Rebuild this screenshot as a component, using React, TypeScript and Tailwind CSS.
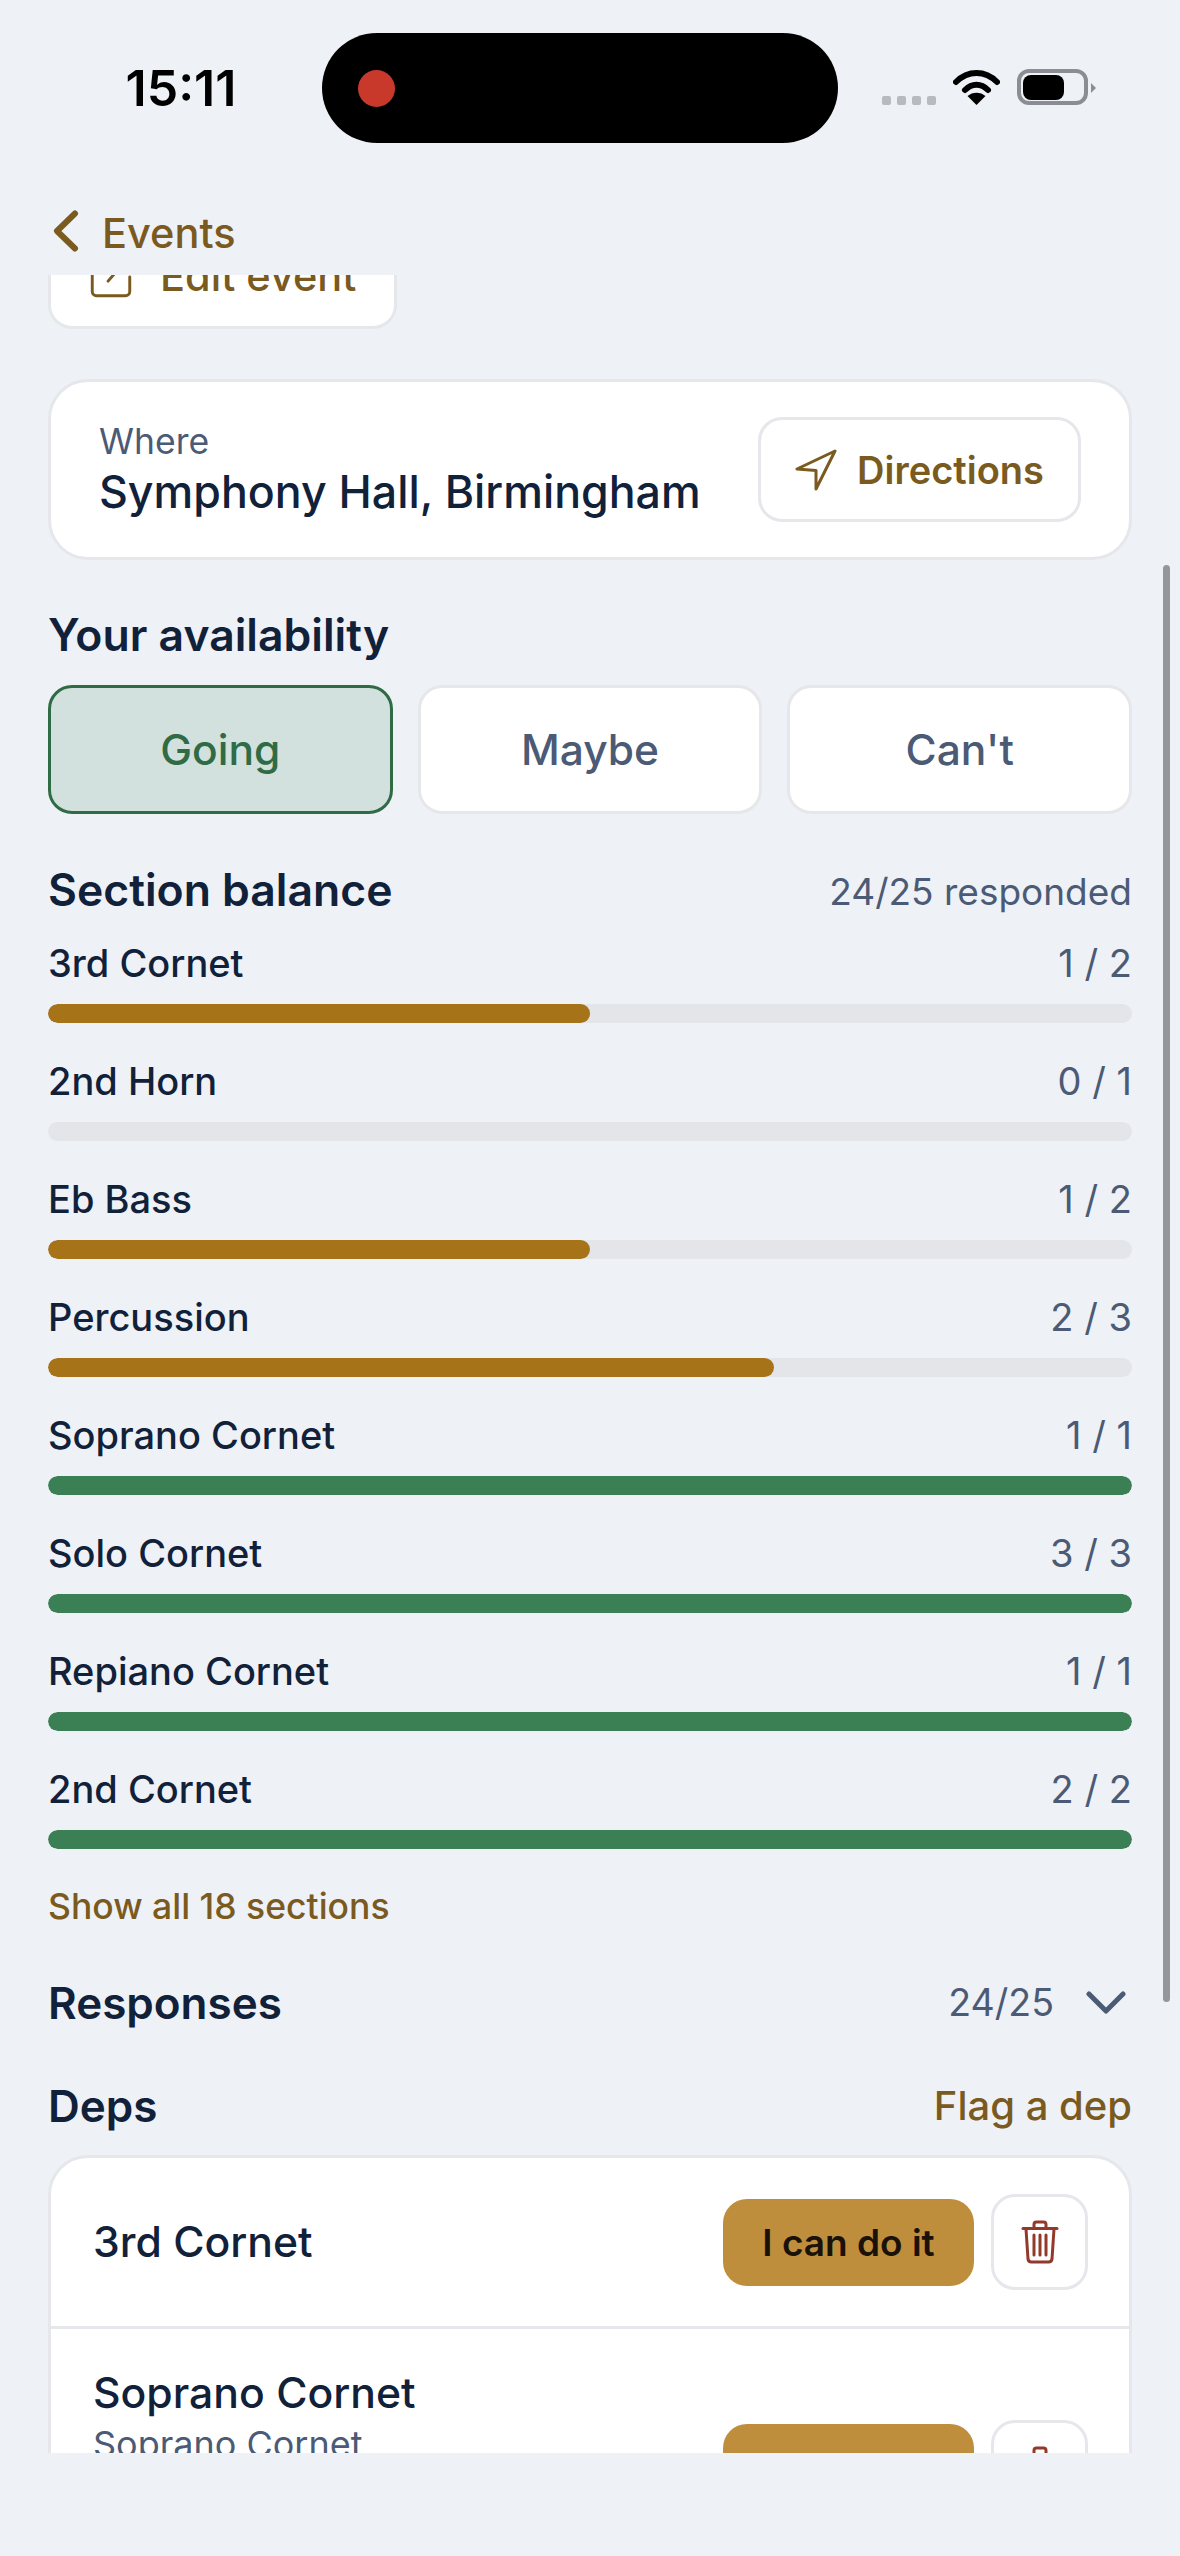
import React from "react";

const sections = [
  { name: "3rd Cornet", have: 1, need: 2 },
  { name: "2nd Horn", have: 0, need: 1 },
  { name: "Eb Bass", have: 1, need: 2 },
  { name: "Percussion", have: 2, need: 3 },
  { name: "Soprano Cornet", have: 1, need: 1 },
  { name: "Solo Cornet", have: 3, need: 3 },
  { name: "Repiano Cornet", have: 1, need: 1 },
  { name: "2nd Cornet", have: 2, need: 2 },
];

function Trash() {
  return (
    <svg width="38" height="44" viewBox="0 0 38 44" fill="none" stroke="#93392a" strokeWidth="3" strokeLinecap="round" strokeLinejoin="round">
      <path d="M2 8.500h34" />
      <path d="M13 8V4.500a2.500 2.500 0 0 1 2.500-2.500h7a2.500 2.500 0 0 1 2.500 2.500V8" />
      <path d="M5 9l2 30a3.500 3.500 0 0 0 3.500 3h17a3.500 3.500 0 0 0 3.500-3l2-30" />
      <path d="M13 15v20M19 15v20M25 15v20" />
    </svg>
  );
}

function DepRow({ name, sub }: { name: string; sub?: string }) {
  return (
    <div className={"flex items-center justify-between pl-[42px] pr-[41px] " + (sub ? "h-[277px]" : "h-[171px] border-b-[3px] border-[#e5e7eb]")}>
      <div className={"flex flex-col " + (sub ? "self-start pt-[36px]" : "")}>
        <span className="text-[42.700px] leading-[56px] font-[550] text-[#12213a]">{name}</span>
        {sub && <span className="text-[36px] leading-[46px] text-[#4b5a75]">{sub}</span>}
      </div>
      <div className="flex items-center gap-[17px]">
        <div className="flex h-[87px] w-[251px] items-center justify-center rounded-[24px] bg-[#bf8e3c] text-[37px] font-semibold text-[#1a1208]">I can do it</div>
        <div className="flex h-[96px] w-[97px] items-center justify-center rounded-[24px] border-[3px] border-[#e5e7eb] bg-white"><Trash /></div>
      </div>
    </div>
  );
}

export default function App() {
  return (
    <div className="relative h-[2556px] w-[1180px] overflow-hidden bg-[#eef1f6] font-['Inter',sans-serif]">
      <div className="flex h-[176px] items-start">
        <div className="w-[322px] pl-[40px] pt-[61px] text-center text-[50px] leading-[54px] font-semibold text-black">15:11</div>
        <div className="mt-[33px] flex h-[110px] w-[516px] items-center rounded-[55px] bg-black pl-[36px]">
          <div className="h-[37px] w-[37px] rounded-full bg-[#c9392b]" />
        </div>
        <div className="ml-[44px] flex items-start pt-[69px]">
          <div className="mt-[27px] flex gap-[6px]">
            <span className="h-[9px] w-[9px] rounded-[2px] bg-[#b8babd]" />
            <span className="h-[9px] w-[9px] rounded-[2px] bg-[#b8babd]" />
            <span className="h-[9px] w-[9px] rounded-[2px] bg-[#b8babd]" />
            <span className="h-[9px] w-[9px] rounded-[2px] bg-[#b8babd]" />
          </div>
          <svg className="ml-[17px]" width="47" height="36" viewBox="0 0 47 36" fill="none" stroke="black" strokeWidth="6" strokeLinecap="round">
            <path d="M3 13C15 1 32 1 44 13" />
            <path d="M12 21c7-7 16-7 23 0" />
            <path d="M23.500 36l-9-9c5-4.500 13-4.500 18 0z" fill="black" stroke="none" />
          </svg>
          <div className="ml-[17px] flex h-[36px] w-[71px] items-center rounded-[12px] border-[4px] border-[#8a8d91] pl-[2px]">
            <div className="h-[25px] w-[41px] rounded-[8px] bg-black" />
          </div>
          <svg className="ml-[3px] mt-[14px]" width="5" height="10" viewBox="0 0 5 10"><path d="M0 0l5 5-5 5z" fill="#8a8d91" /></svg>
        </div>
      </div>

      <div className="flex h-[99px] items-start gap-[22px] pl-[50px] pt-[34px]">
        <svg width="30" height="42" viewBox="0 0 30 42" fill="none" stroke="#7a5a1e" strokeWidth="6" strokeLinecap="round" strokeLinejoin="round">
          <path d="M25 3.500L7 21l18 17.500" />
        </svg>
        <span className="text-[41.500px] leading-[46px] font-[550] text-[#7a5a1e]">Events</span>
      </div>

      <div className="relative h-[2178px] overflow-hidden px-[48px]">
        <div className="-mt-[50px]">
          <div className="flex h-[104px] w-[349px] items-center gap-[24px] rounded-[24px] border-[3px] border-[#e5e7eb] bg-white pl-[35px]">
            <svg width="50" height="50" viewBox="0 0 24 24" fill="none" stroke="#7a5a1e" strokeWidth="1.400" strokeLinecap="round" strokeLinejoin="round">
              <path d="M12 3H5a2 2 0 0 0-2 2v14a2 2 0 0 0 2 2h14a2 2 0 0 0 2-2v-7" />
              <path d="M10.600 14L13 11.200L20 3" />
            </svg>
            <span className="-mt-[3px] text-[41.500px] leading-[50px] font-[550] text-[#7a5a1e]">Edit event</span>
          </div>

          <div className="mt-[50px] flex h-[181px] items-center justify-between rounded-[40px] border-[3px] border-[#e5e7eb] bg-white pl-[48px] pr-[48px]">
            <div className="flex flex-col">
              <span className="text-[35.500px] leading-[44px] text-[#4b5a75]">Where</span>
              <span className="text-[44.700px] leading-[56px] font-[550] text-[#12213a]">Symphony Hall, Birmingham</span>
            </div>
            <div className="flex h-[105px] w-[323px] items-center justify-center gap-[20px] rounded-[24px] border-[3px] border-[#e5e7eb] bg-white">
              <svg width="42" height="42" viewBox="0 0 42 42" fill="none" stroke="#7a5a1e" strokeWidth="3" strokeLinejoin="round" strokeLinecap="round"><path d="M40 2L2 20l19 1.500L21 40z" /></svg>
              <span className="mt-[2px] text-[38px] font-semibold text-[#7a5a1e]">Directions</span>
            </div>
          </div>

          <h2 className="mt-[51px] text-[44.500px] leading-[48px] font-semibold text-[#12213a]">Your availability</h2>
          <div className="mt-[26px] flex gap-[25px]">
            <div className="flex h-[129px] flex-1 items-center justify-center rounded-[24px] border-[3px] border-[#2f6b45] bg-[#d2e0de] text-[42.500px] font-[550] text-[#2f6b45]">Going</div>
            <div className="flex h-[129px] flex-1 items-center justify-center rounded-[24px] border-[3px] border-[#e5e7eb] bg-white text-[42.500px] font-[550] text-[#4b5a75]">Maybe</div>
            <div className="flex h-[129px] flex-1 items-center justify-center rounded-[24px] border-[3px] border-[#e5e7eb] bg-white text-[42.500px] font-[550] text-[#4b5a75]">Can't</div>
          </div>

          <div className="mt-[52px] flex h-[48px] items-center justify-between">
            <h2 className="text-[44.500px] leading-[48px] font-semibold text-[#12213a]">Section balance</h2>
            <span className="mt-[3px] text-[37px] text-[#4b5a75]">24/25 responded</span>
          </div>

          <div className="mt-[25px] flex flex-col gap-[34px]">
            {sections.map((s) => {
              const full = s.have === s.need;
              return (
                <div key={s.name} className="flex flex-col gap-[17px]">
                  <div className="flex h-[48px] items-center justify-between">
                    <span className="text-[38px] font-[550] text-[#12213a]">{s.name}</span>
                    <span className="text-[38px] text-[#4b5a75]">{s.have} / {s.need}</span>
                  </div>
                  <div className="h-[19px] overflow-hidden rounded-full bg-[#e3e5e9]">
                    <div className={"h-full rounded-full " + (full ? "bg-[#3b8055]" : "bg-[#a67319]")} style={{ width: `${Math.round((s.have / s.need) * 100)}%` }} />
                  </div>
                </div>
              );
            })}
          </div>

          <div className="mt-[36px] text-[35.500px] leading-[44px] font-[550] text-[#7a5a1e]">Show all 18 sections</div>

          <div className="mt-[46px] flex items-center justify-between">
            <h2 className="text-[44px] leading-[52px] font-semibold text-[#12213a]">Responses</h2>
            <div className="flex items-center gap-[32px] pr-[6px]">
              <span className="text-[37.500px] text-[#4b5a75]">24/25</span>
              <svg width="40" height="24" viewBox="0 0 40 24" fill="none" stroke="#4b5a75" strokeWidth="5" strokeLinecap="round" strokeLinejoin="round"><path d="M3 3l17 17L37 3" /></svg>
            </div>
          </div>

          <div className="mt-[45px] flex items-center justify-between">
            <h2 className="text-[44px] leading-[52px] font-semibold text-[#12213a]">Deps</h2>
            <span className="text-[40px] font-[550] text-[#7a5a1e]">Flag a dep</span>
          </div>

          <div className="mt-[19px] overflow-hidden rounded-[40px] border-[3px] border-[#e5e7eb] bg-white">
            <DepRow name="3rd Cornet" />
            <DepRow name="Soprano Cornet" sub="Soprano Cornet" />
          </div>
        </div>
        <div className="absolute right-[10px] top-[290px] h-[1437px] w-[7px] rounded-full bg-[#93969b]" />
      </div>
    </div>
  );
}
